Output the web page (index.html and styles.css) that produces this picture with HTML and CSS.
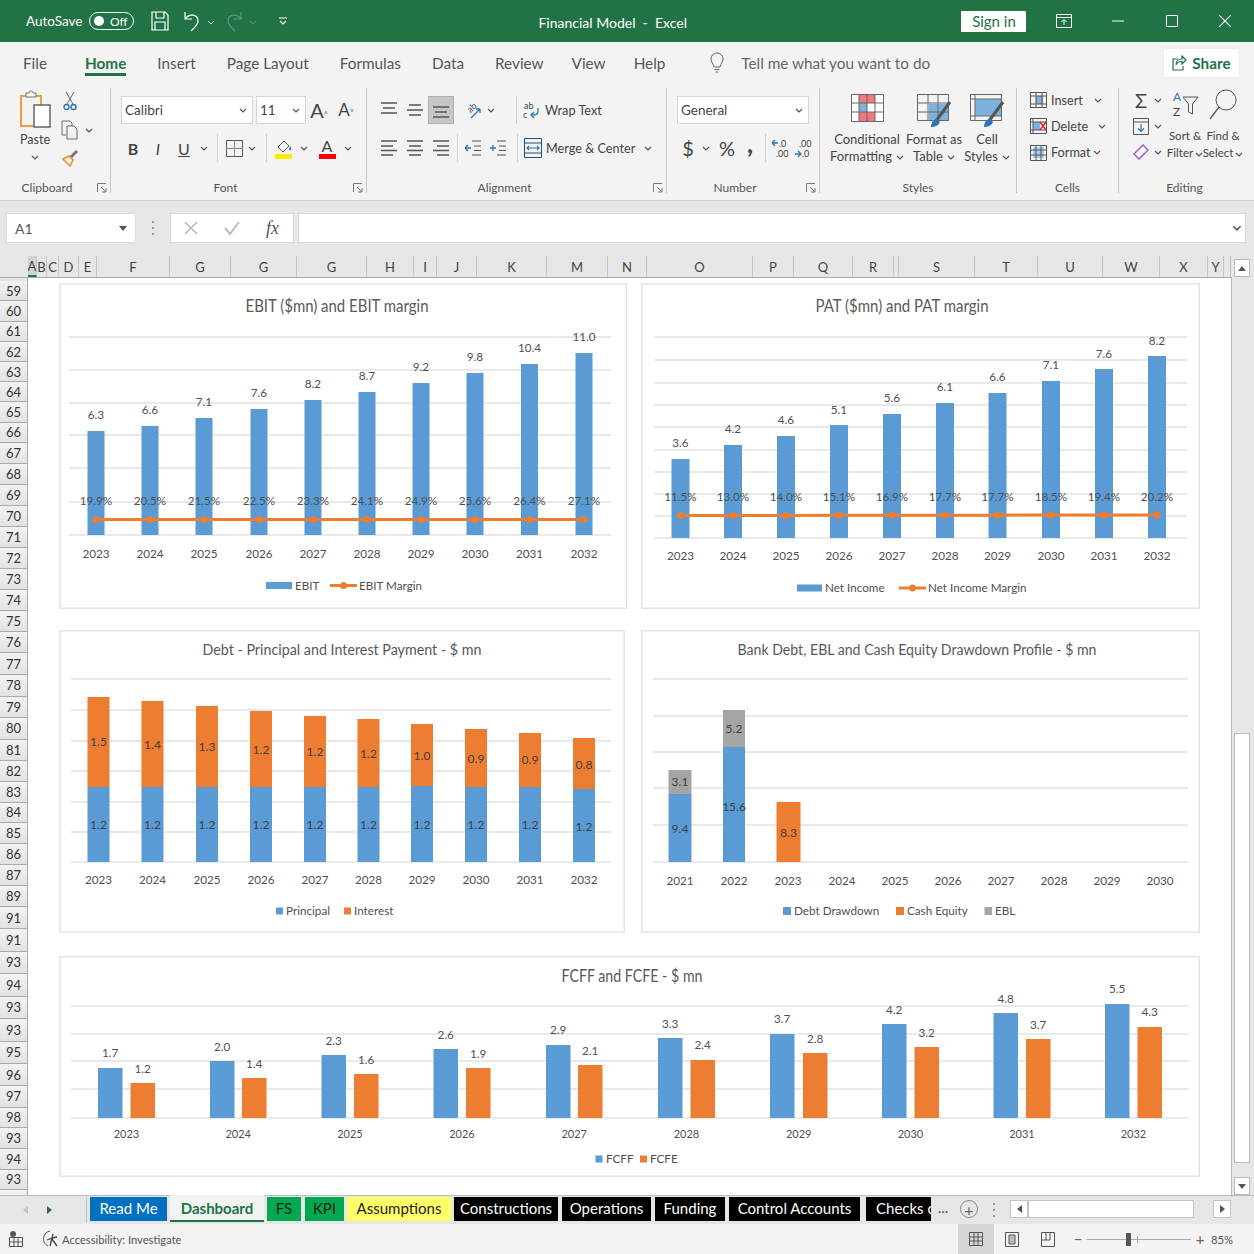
FILE: index.html
```html
<!DOCTYPE html>
<html lang="en">

<head>
    <meta charset="UTF-8">
    <title>Financial Model - Excel</title>
    <link rel="stylesheet" href="styles.css">
</head>

<body>
    <!-- shared icons -->
    <svg class="sprite">
        <symbol id="chev" viewBox="0 0 8 5"><path d="M1 1l3 3 3-3" fill="none" stroke="#555" stroke-width="1.2"/></symbol>
        <symbol id="launcher" viewBox="0 0 10 10"><path d="M.5 9V.5H9M4 4l5 5M9 5v4H5" fill="none" stroke="#777"/></symbol>
        <symbol id="a-top" viewBox="0 0 16 16"><path d="M0 1h16M2 6h12M0 11h16" stroke="#555" stroke-width="1.3"/></symbol>
        <symbol id="a-mid" viewBox="0 0 16 16"><path d="M2 3h12M0 8h16M2 13h12" stroke="#555" stroke-width="1.3"/></symbol>
        <symbol id="a-bot" viewBox="0 0 16 16"><path d="M0 5h16M2 10h12M0 15h16" stroke="#555" stroke-width="1.3"/></symbol>
        <symbol id="a-left" viewBox="0 0 16 16"><path d="M0 1h16M0 6h12M0 10.500h16M0 15h12" stroke="#555" stroke-width="1.3"/></symbol>
        <symbol id="a-center" viewBox="0 0 16 16"><path d="M0 1h16M2 6h12M0 10.500h16M2 15h12" stroke="#555" stroke-width="1.3"/></symbol>
        <symbol id="a-right" viewBox="0 0 16 16"><path d="M0 1h16M4 6h12M0 10.500h16M4 15h12" stroke="#555" stroke-width="1.3"/></symbol>
    </svg>

    <header class="title-bar">
        <span class="autosave">AutoSave</span>
        <span class="toggle"><span class="toggle-dot"></span>Off</span>
        <svg class="qa-save" width="18" height="20" viewBox="0 0 18 20"><path d="M1 1h13l3 3v15H1zM5 1v6h8V1M4 19v-8h10v8" fill="none" stroke="#fff" stroke-width="1.2"/></svg>
        <svg class="qa-undo" width="18" height="22" viewBox="0 0 18 22"><path d="M2 2v7h7M2 9c4-6 13-5 13 2 0 4-4 7-7 10" fill="none" stroke="#fff" stroke-width="1.2"/></svg>
        <svg class="qa-chev" width="8" height="5" viewBox="0 0 8 5"><path d="M1 1l3 3 3-3" fill="none" stroke="#fff"/></svg>
        <svg class="qa-redo" width="18" height="22" viewBox="0 0 18 22"><path d="M16 2v7H9M16 9C12 3 3 4 3 11c0 4 4 7 7 10" fill="none" stroke="#5f9a7c" stroke-width="1.2"/></svg>
        <svg class="qa-chev" width="8" height="5" viewBox="0 0 8 5"><path d="M1 1l3 3 3-3" fill="none" stroke="#5f9a7c"/></svg>
        <svg class="qa-more" width="8" height="9" viewBox="0 0 8 9"><path d="M0 1h8M1 4l3 3 3-3" fill="none" stroke="#fff" stroke-width="1.2"/></svg>
        <span class="doc-title">Financial Model&nbsp; -&nbsp; Excel</span>
        <a class="sign-in">Sign in</a>
        <svg class="win-display" width="16" height="14" viewBox="0 0 16 14"><path d="M.5.5h15v13H.5zM.5 3.500h15M8 11V6M5.500 8L8 5.500 10.500 8" fill="none" stroke="#fff"/></svg>
        <svg class="win-min" width="12" height="2" viewBox="0 0 12 2"><path d="M0 1h12" stroke="#fff"/></svg>
        <svg class="win-max" width="12" height="12" viewBox="0 0 12 12"><path d="M.5.5h11v11H.5z" fill="none" stroke="#fff"/></svg>
        <svg class="win-close" width="12" height="12" viewBox="0 0 12 12"><path d="M0 0l12 12M12 0L0 12" stroke="#fff" stroke-width="1.1"/></svg>
    </header>

    <nav class="tab-bar">
        <a>File</a>
        <a class="active">Home</a>
        <a>Insert</a>
        <a>Page Layout</a>
        <a>Formulas</a>
        <a>Data</a>
        <a>Review</a>
        <a class="tab-view">View</a>
        <a class="tab-help">Help</a>
        <svg class="bulb" width="14" height="21" viewBox="0 0 14 21"><path d="M4 15C3 11 1 10 1 7a6 6 0 0 1 12 0c0 3-2 4-3 8zM4.500 17.500h5M5.500 20h3" fill="none" stroke="#666"/></svg>
        <span class="tell-me">Tell me what you want to do</span>
        <a class="share">
            <svg width="15" height="16" viewBox="0 0 15 16"><path d="M6 4H1v11h10v-4M4 10c0-4 3-6 6-6V1l4 4-4 4V6.500c-3 0-5 1-6 3.500z" fill="none" stroke="#217346" stroke-width="1.2"/></svg>
            Share
        </a>
    </nav>

    <section class="ribbon">
        <div class="group group-clipboard">
            <div class="group-body">
                <div class="paste">
                    <svg width="32" height="38" viewBox="0 0 32 38"><rect x="2" y="6" width="20" height="30" fill="none" stroke="#e9a23b" stroke-width="2"/><path d="M7 7V3h3a2 2 0 0 1 4 0h3v4z" fill="#f5f5f5" stroke="#777"/><rect x="15" y="15" width="16" height="22" fill="#fff" stroke="#666" stroke-width="1.5"/></svg>
                    <span class="paste-label">Paste</span>
                    <svg class="paste-chev" width="8" height="5"><use href="#chev"/></svg>
                </div>
                <div class="clip-tools">
                    <svg width="14" height="20" viewBox="0 0 14 20"><path d="M4 13L11 1M10 13L3 1" stroke="#666" fill="none"/><circle cx="3.500" cy="16" r="2.500" fill="none" stroke="#2e75b6" stroke-width="1.400"/><circle cx="10.500" cy="16" r="2.500" fill="none" stroke="#2e75b6" stroke-width="1.400"/></svg>
                    <div class="copy-row">
                        <svg width="18" height="20" viewBox="0 0 18 20"><path d="M5 15H1V1h8l2 2v3M6 6h7l3 3v10H6z" fill="none" stroke="#666"/></svg>
                        <svg width="8" height="5"><use href="#chev"/></svg>
                    </div>
                    <svg width="18" height="18" viewBox="0 0 18 18"><path d="M2 10l7 7 3-6-4-4z" fill="#fdf0e0" stroke="#e88b2d" stroke-width="1.500"/><path d="M10 8l6-6" stroke="#777" stroke-width="3"/></svg>
                </div>
            </div>
            <div class="group-foot">Clipboard<svg class="launcher" width="10" height="10"><use href="#launcher"/></svg></div>
        </div>

        <div class="group group-font">
            <div class="group-body rows">
                <div class="tool-row">
                    <div class="combo combo-font">Calibri<svg width="8" height="5"><use href="#chev"/></svg></div>
                    <div class="combo combo-size">11<svg width="8" height="5"><use href="#chev"/></svg></div>
                    <span class="btn w26 grow-a">A<sup>˄</sup></span>
                    <span class="btn w28 shrink-a">A<sup>˅</sup></span>
                </div>
                <div class="tool-row">
                    <span class="btn w24 fmt fmt-b">B</span>
                    <span class="btn w26 fmt fmt-i">I</span>
                    <span class="btn w26 fmt fmt-u">U</span>
                    <span class="btn w14"><svg width="8" height="5"><use href="#chev"/></svg></span>
                    <span class="sep"></span>
                    <span class="btn w20"><svg width="17" height="17" viewBox="0 0 17 17"><path d="M.5.5h16v16H.5z" fill="none" stroke="#555"/><path d="M8.500 0v17M0 8.500h17" stroke="#888"/></svg></span>
                    <span class="btn w16"><svg width="8" height="5"><use href="#chev"/></svg></span>
                    <span class="sep"></span>
                    <span class="btn w22"><svg width="20" height="21" viewBox="0 0 20 21"><path d="M4 9l6-6 5 5-6 6z" fill="#fff" stroke="#555"/><path d="M16 8c1 2 2 3 1 4s-2 0-2-1z" fill="#2e75b6"/><rect x="1" y="16" width="17" height="5" fill="#ffeb00"/></svg></span>
                    <span class="btn w18"><svg width="8" height="5"><use href="#chev"/></svg></span>
                    <span class="btn w28"><span class="font-color">A</span></span>
                    <span class="btn w14"><svg width="8" height="5"><use href="#chev"/></svg></span>
                </div>
            </div>
            <div class="group-foot">Font<svg class="launcher" width="10" height="10"><use href="#launcher"/></svg></div>
        </div>

        <div class="group group-align">
            <div class="group-body rows">
                <div class="tool-row">
                    <span class="btn w26"><svg width="16" height="16"><use href="#a-top"/></svg></span>
                    <span class="btn w26"><svg width="16" height="16"><use href="#a-mid"/></svg></span>
                    <span class="btn w26 pressed"><svg width="16" height="16"><use href="#a-bot"/></svg></span>
                    <span class="orient">
                        <svg width="18" height="18" viewBox="0 0 18 18"><text x="3" y="10" transform="rotate(-45 7 8)" class="svg-tiny">ab</text><path d="M6 17L15 8M15 8v4M15 8h-4" fill="none" stroke="#2e75b6" stroke-width="1.300"/></svg>
                        <svg width="8" height="5"><use href="#chev"/></svg>
                    </span>
                    <span class="sep"></span>
                    <svg width="18" height="20" viewBox="0 0 18 20"><text x="1" y="9" class="svg-tiny">ab</text><text x="0" y="18" class="svg-tiny">c</text><path d="M15 8v4c0 3-3 3-7 3M11 12l-3 3 3 3" fill="none" stroke="#2e75b6" stroke-width="1.300"/></svg>
                    <span class="tool-text">Wrap Text</span>
                </div>
                <div class="tool-row">
                    <span class="btn w26"><svg width="16" height="16"><use href="#a-left"/></svg></span>
                    <span class="btn w26"><svg width="16" height="16"><use href="#a-center"/></svg></span>
                    <span class="btn w26"><svg width="16" height="16"><use href="#a-right"/></svg></span>
                    <span class="sep tight"></span>
                    <span class="btn w24"><svg width="16" height="16" viewBox="0 0 16 16"><path d="M7 1h9M9 6h7M9 10.500h7M7 15h9" stroke="#555" stroke-width="1.200"/><path d="M6 8H0M3 5L0 8l3 3" fill="none" stroke="#2e75b6" stroke-width="1.300"/></svg></span>
                    <span class="btn w26"><svg width="16" height="16" viewBox="0 0 16 16"><path d="M7 1h9M9 6h7M9 10.500h7M7 15h9" stroke="#555" stroke-width="1.200"/><path d="M0 8h6M3 5v6" fill="none" stroke="#2e75b6" stroke-width="1.300"/></svg></span>
                    <span class="sep"></span>
                    <svg width="18" height="20" viewBox="0 0 18 20"><path d="M.5.500h17v19H.5zM.5 5h17M.5 15h17" fill="none" stroke="#1f4e79"/><path d="M3 10h12M5 8l-2 2 2 2M13 8l2 2-2 2" fill="none" stroke="#2e75b6" stroke-width="1.200"/></svg>
                    <span class="tool-text">Merge &amp; Center</span>
                    <svg class="merge-chev" width="8" height="5"><use href="#chev"/></svg>
                </div>
            </div>
            <div class="group-foot">Alignment<svg class="launcher" width="10" height="10"><use href="#launcher"/></svg></div>
        </div>

        <div class="group group-number">
            <div class="group-body rows">
                <div class="tool-row">
                    <div class="combo combo-format">General<svg width="8" height="5"><use href="#chev"/></svg></div>
                </div>
                <div class="tool-row">
                    <span class="btn w22 num-sym">$</span>
                    <span class="btn w14"><svg width="8" height="5"><use href="#chev"/></svg></span>
                    <span class="btn w28 num-sym">%</span>
                    <span class="btn w18 num-comma">,</span>
                    <span class="sep"></span>
                    <svg width="18" height="22" viewBox="0 0 18 22"><text x="7" y="10" class="svg-tiny">.0</text><text x="4" y="20" class="svg-tiny">.00</text><path d="M6 6H0M3 3L0 6l3 3" fill="none" stroke="#2e75b6" stroke-width="1.300"/></svg>
                    <svg class="dec-two" width="18" height="22" viewBox="0 0 18 22"><text x="4" y="10" class="svg-tiny">.00</text><text x="7" y="20" class="svg-tiny">.0</text><path d="M0 17h6M3 14l3 3-3 3" fill="none" stroke="#2e75b6" stroke-width="1.300"/></svg>
                </div>
            </div>
            <div class="group-foot">Number<svg class="launcher" width="10" height="10"><use href="#launcher"/></svg></div>
        </div>

        <div class="group group-styles">
            <div class="group-body styles-body">
                <div class="big-tool w78">
                    <div class="big-icon">
                        <svg width="33" height="28" viewBox="0 0 33 28"><rect x=".5" y=".5" width="32" height="27" fill="#fff"/><rect x="8" y="1" width="16" height="8" fill="#f4777f"/><rect x="8" y="9" width="8" height="9" fill="#7db2e0"/><rect x="8" y="18" width="16" height="9" fill="#f4777f"/><path d="M.5.500h32v27H.5zM8 0v28M16 0v28M24 0v28M0 9h33M0 18h33" fill="none" stroke="#666"/></svg>
                    </div>
                    <span>Conditional</span>
                    <span>Formatting<svg width="8" height="5"><use href="#chev"/></svg></span>
                </div>
                <div class="big-tool w56">
                    <div class="big-icon">
                        <svg width="35" height="34" viewBox="0 0 35 34"><rect x="12" y="10" width="20" height="17" fill="#7db2e0"/><path d="M.5.500h31v26H.5zM11 0v27M21 0v27M0 9h32M0 18h32" fill="none" stroke="#666"/><path d="M19 27L33 8" stroke="#555" stroke-width="3"/><path d="M14 33c0-5 3-8 6-8l3 3c-1 3-5 5-9 5z" fill="#2e75b6"/></svg>
                    </div>
                    <span>Format as</span>
                    <span>Table<svg width="8" height="5"><use href="#chev"/></svg></span>
                </div>
                <div class="big-tool w50">
                    <div class="big-icon">
                        <svg width="35" height="34" viewBox="0 0 35 34"><rect x="5" y="5" width="26" height="17" fill="#7db2e0"/><path d="M.5.500h31v26H.5zM5 0v27M0 5h32M0 22h32" fill="none" stroke="#666"/><path d="M19 27L33 8" stroke="#555" stroke-width="3"/><path d="M14 33c0-5 3-8 6-8l3 3c-1 3-5 5-9 5z" fill="#2e75b6"/></svg>
                    </div>
                    <span>Cell</span>
                    <span>Styles<svg width="8" height="5"><use href="#chev"/></svg></span>
                </div>
            </div>
            <div class="group-foot">Styles</div>
        </div>

        <div class="group group-cells">
            <div class="group-body stack">
                <div class="stack-row">
                    <svg width="17" height="16" viewBox="0 0 17 16"><rect x="6" y="4" width="7" height="8" fill="#7db2e0"/><path d="M.5.500h16v15H.5zM6 0v16M12 0v16M0 4h17M0 12h17" fill="none" stroke="#555"/></svg>
                    <span class="tool-text">Insert</span><svg class="chev-insert" width="8" height="5"><use href="#chev"/></svg>
                </div>
                <div class="stack-row">
                    <svg width="17" height="16" viewBox="0 0 17 16"><rect x="3" y="4" width="7" height="8" fill="#7db2e0"/><path d="M.5.500h16v15H.5zM3 0v16M0 4h17M0 12h17" fill="none" stroke="#555"/><path d="M10 4l6 8M16 4l-6 8" stroke="#e3202c" stroke-width="1.500"/></svg>
                    <span class="tool-text">Delete</span><svg class="chev-delete" width="8" height="5"><use href="#chev"/></svg>
                </div>
                <div class="stack-row">
                    <svg width="17" height="18" viewBox="0 0 17 18"><rect x="3" y="4" width="11" height="11" fill="#a9cdee"/><path d="M.5 2.500h16v15H.5zM6 2v16M11 2v16M0 7h17M0 12h17" fill="none" stroke="#555"/></svg>
                    <span class="tool-text">Format</span><svg class="chev-format" width="8" height="5"><use href="#chev"/></svg>
                </div>
            </div>
            <div class="group-foot">Cells</div>
        </div>

        <div class="group group-editing">
            <div class="group-body editing-body">
                <div class="stack editing-stack">
                    <div class="stack-row"><span class="sigma">Σ</span><svg width="8" height="5"><use href="#chev"/></svg></div>
                    <div class="stack-row">
                        <svg width="16" height="17" viewBox="0 0 16 17"><path d="M.5.500h15v16H.5zM.5 4h15" fill="none" stroke="#555"/><path d="M8 6v7M5 10.500l3 3 3-3" fill="none" stroke="#2e75b6" stroke-width="1.200"/></svg>
                        <svg width="8" height="5"><use href="#chev"/></svg>
                    </div>
                    <div class="stack-row">
                        <svg width="16" height="17" viewBox="0 0 16 17"><path d="M1 10l9-9 5 5-9 9z" fill="#fff" stroke="#a64dc2" stroke-width="1.300"/></svg>
                        <svg width="8" height="5"><use href="#chev"/></svg>
                    </div>
                </div>
                <div class="big-tool w38 small-big">
                    <div class="big-icon short">
                        <svg width="27" height="30" viewBox="0 0 27 30"><text x="1" y="12" class="svg-sort svg-blue">A</text><text x="1" y="26.500" class="svg-sort">Z</text><path d="M11 8h15l-5.500 7v10l-4-2v-8z" fill="none" stroke="#555"/></svg>
                    </div>
                    <span>Sort &amp;</span>
                    <span>Filter<svg width="8" height="5"><use href="#chev"/></svg></span>
                </div>
                <div class="big-tool w38 small-big">
                    <div class="big-icon short">
                        <svg width="28" height="32" viewBox="0 0 28 32"><circle cx="17" cy="11" r="10" fill="none" stroke="#555"/><path d="M10 18L1 30" stroke="#555" stroke-width="1.300"/></svg>
                    </div>
                    <span>Find &amp;</span>
                    <span>Select<svg width="8" height="5"><use href="#chev"/></svg></span>
                </div>
            </div>
            <div class="group-foot">Editing</div>
        </div>
    </section>

    <section class="formula-bar">
        <div class="name-box">A1<span class="tri-down"></span></div>
        <span class="grip"></span>
        <div class="fx-buttons">
            <svg width="14" height="14" viewBox="0 0 14 14"><path d="M1 1l12 12M13 1L1 13" stroke="#bbb" stroke-width="1.600"/></svg>
            <svg width="16" height="14" viewBox="0 0 16 14"><path d="M1 7l5 6L15 1" fill="none" stroke="#bbb" stroke-width="2"/></svg>
            <span class="fx">fx</span>
        </div>
        <div class="formula-input"><svg width="10" height="6" viewBox="0 0 8 5"><path d="M1 1l3 3 3-3" fill="none" stroke="#555" stroke-width="1.300"/></svg></div>
    </section>

    <main class="workbook">
        <div class="grid">
            <div class="col-heads" id="colHeads"></div>
            <div class="sheet">
                <div class="row-heads" id="rowHeads"></div>
                <div class="canvas">
                    <div class="chart-row row-top">
                        <div class="chart chart-ebit" id="ebit"></div>
                        <div class="chart chart-pat" id="pat"></div>
                    </div>
                    <div class="chart-row row-mid">
                        <div class="chart chart-debt" id="debt"></div>
                        <div class="chart chart-draw" id="draw"></div>
                    </div>
                    <div class="chart chart-fcf" id="fcf"></div>
                </div>
            </div>
        </div>
        <div class="vscroll">
            <span class="sb-btn"><span class="tri-up"></span></span>
            <span class="sb-thumb"></span>
            <span class="sb-btn"><span class="tri-down"></span></span>
        </div>
    </main>

    <section class="sheet-tabs">
        <div class="tab-nav"><span class="nav-prev"></span><span class="nav-next"></span></div>
        <a class="tab tab-read">Read Me</a>
        <a class="tab tab-dash">Dashboard</a>
        <a class="tab tab-fs">FS</a>
        <a class="tab tab-kpi">KPI</a>
        <a class="tab tab-assume">Assumptions</a>
        <a class="tab tab-black tab-cons">Constructions</a>
        <a class="tab tab-black tab-ops">Operations</a>
        <a class="tab tab-black tab-fund">Funding</a>
        <a class="tab tab-black tab-ctrl">Control Accounts</a>
        <a class="tab tab-black tab-checks">Checks of</a>
        <span class="tab-more">...</span>
        <span class="tab-add">+</span>
        <span class="grip"></span>
        <div class="hscroll">
            <span class="hs-btn"><span class="tri-left"></span></span>
            <span class="hs-thumb"></span>
            <span class="hs-btn"><span class="tri-right"></span></span>
        </div>
    </section>

    <footer class="status-bar">
        <svg class="st-mode" width="14" height="16" viewBox="0 0 14 16"><circle cx="4" cy="3" r="3" fill="#555"/><path d="M.5 6.500h13v9H.5zM5 6v10M9 6v10M0 11h14" fill="none" stroke="#555"/></svg>
        <svg class="st-access" width="18" height="18" viewBox="0 0 18 18"><path d="M8 1a8 8 0 0 0-2 15" fill="none" stroke="#555"/><path d="M11 4l-1 4-5 2M10 8l5-1M10 8l-2 8M10 9l5 7" fill="none" stroke="#444" stroke-width="1.300"/></svg>
        <span class="st-text">Accessibility: Investigate</span>
        <span class="st-view active">
            <svg width="14" height="14" viewBox="0 0 14 14"><path d="M.5.500h13v13H.5zM5 0v14M9 0v14M0 5h14M0 9h14" fill="none" stroke="#555"/></svg>
        </span>
        <span class="st-view">
            <svg width="14" height="15" viewBox="0 0 14 15"><path d="M.5.500h13v14H.5z" fill="none" stroke="#555"/><path d="M4 3h6v9H4z" fill="#bbb" stroke="#555"/></svg>
        </span>
        <span class="st-view">
            <svg width="14" height="15" viewBox="0 0 14 15"><path d="M.5.500h13v14H.5zM5 0v8h4V0M0 8h5" fill="none" stroke="#555"/></svg>
        </span>
        <span class="zoom-btn zoom-minus">−</span>
        <span class="zoom-track"><span class="zoom-handle"></span><span class="zoom-tick"></span></span>
        <span class="zoom-btn zoom-plus">+</span>
        <span class="zoom-pct">85%</span>
    </footer>

    <script src="charts.js"></script>
</body>

</html>
```

FILE: styles.css
```css
* {
    box-sizing: border-box;
}

body {
    margin: 0;
    width: 1254px;
    height: 1254px;
    overflow: hidden;
    display: flex;
    flex-direction: column;
    background: #f3f3f3;
    font-family: Lato, "Liberation Sans", sans-serif;
    font-size: 13px;
    color: #444;
}

.sprite {
    display: none;
}

svg {
    flex: none;
}

/* title bar */
.title-bar {
    height: 42px;
    flex: none;
    display: flex;
    align-items: center;
    padding-left: 26px;
    background: #217346;
    color: #fff;
    font-size: 14px;
}

.autosave {
    font-size: 13.500px;
}

.toggle {
    width: 45px;
    height: 18px;
    margin-left: 7px;
    display: flex;
    align-items: center;
    justify-content: space-between;
    padding: 0 6px 0 4px;
    border: 1px solid #fff;
    border-radius: 9px;
    font-size: 12px;
}

.toggle-dot {
    width: 10px;
    height: 10px;
    border-radius: 50%;
    background: #fff;
}

.qa-save {
    margin-left: 17px;
}

.qa-undo {
    margin-left: 14px;
}

.qa-chev {
    margin-left: 6px;
    margin-top: 2px;
}

.qa-redo {
    margin-left: 10px;
}

.qa-more {
    margin-left: 22px;
}

.doc-title {
    margin-left: 251px;
    width: 423px;
    padding-top: 2px;
}

.sign-in {
    width: 65px;
    height: 21px;
    display: flex;
    align-items: center;
    justify-content: center;
    background: #fff;
    color: #217346;
    font-size: 15px;
    border-radius: 1px;
}

.win-display {
    margin-left: 30px;
}

.win-min {
    margin-left: 40px;
}

.win-max {
    margin-left: 42px;
}

.win-close {
    margin-left: 41px;
}

/* ribbon tabs */
.tab-bar {
    height: 43px;
    flex: none;
    display: flex;
    align-items: center;
    gap: 31px;
    padding: 0 0 2px 23px;
    font-size: 15.300px;
    color: #555;
    white-space: nowrap;
}

.tab-bar a.active {
    position: relative;
    margin-left: 7px;
    color: #217346;
    font-weight: 700;
}

.tab-bar a.active::after {
    content: "";
    position: absolute;
    left: 0;
    right: 0;
    bottom: -4px;
    height: 3px;
    background: #217346;
}

.tab-bar .tab-view {
    margin-left: -3px;
}

.tab-bar .tab-help {
    margin-left: -3px;
}

.bulb {
    margin-left: 14px;
}

.tell-me {
    margin-left: -14px;
    width: 392px;
    color: #666;
}

.share {
    width: 75px;
    height: 28px;
    display: flex;
    align-items: center;
    gap: 5px;
    padding-left: 8px;
    background: #fff;
    color: #217346;
    font-weight: 700;
    box-shadow: 0 0 2px #ddd;
}

/* ribbon */
.ribbon {
    height: 115px;
    flex: none;
    display: flex;
    padding: 3px 0 7px;
}

.group {
    position: relative;
    display: flex;
    flex-direction: column;
    border-right: 1px solid #c6c6c6;
}

.group:last-child {
    border-right: 0;
}

.group-clipboard { width: 111px; }
.group-font { width: 256px; }
.group-align { width: 300px; }
.group-number { width: 153px; }
.group-styles { width: 197px; }
.group-cells { width: 102px; }
.group-editing { width: 135px; }

.group-body {
    height: 92px;
    flex: none;
    display: flex;
}

.group-foot {
    margin-top: 1px;
    text-align: center;
    font-size: 12px;
    line-height: 14px;
    color: #555;
}

.group-clipboard .group-foot { padding-right: 16px; }
.group-font .group-foot { padding-right: 26px; }
.group-align .group-foot { padding-right: 24px; }
.group-number .group-foot { padding-right: 16px; }
.group-editing .group-foot { padding-right: 4px; }

.launcher {
    position: absolute;
    right: 3px;
    bottom: 0;
}

.paste {
    width: 32px;
    margin: 2px 0 0 19px;
    display: flex;
    flex-direction: column;
    align-items: center;
    flex: none;
}

.paste-label {
    margin-top: 4px;
    line-height: 16px;
    font-size: 12.500px;
}

.paste-chev {
    margin-top: 7px;
}

.clip-tools {
    margin: 3px 0 0 10px;
    display: flex;
    flex-direction: column;
    gap: 9px;
    align-items: flex-start;
}

.clip-tools > svg:first-child {
    margin-left: 2px;
}

.copy-row {
    display: flex;
    align-items: center;
    gap: 6px;
}

.rows {
    flex-direction: column;
    gap: 10px;
    padding-top: 8px;
}

.tool-row {
    height: 28px;
    display: flex;
    align-items: center;
}

.group-font .rows,
.group-number .rows {
    padding-left: 10px;
}

.group-align .rows {
    padding-left: 9px;
}

.btn {
    height: 28px;
    display: flex;
    align-items: center;
    justify-content: center;
    flex: none;
}

.w14 { width: 14px; }
.w16 { width: 16px; }
.w18 { width: 18px; }
.w20 { width: 20px; }
.w22 { width: 22px; }
.w24 { width: 24px; }
.w26 { width: 26px; }
.w28 { width: 28px; }
.w38 { width: 38px; }
.w50 { width: 50px; }
.w56 { width: 56px; }
.w78 { width: 78px; }

.sep {
    width: 1px;
    height: 28px;
    margin: 0 6px;
    background: #d0d0d0;
    flex: none;
}

.sep.tight {
    margin: 0 3px;
}

.tool-text {
    margin-left: 4px;
    font-size: 12.700px;
    white-space: nowrap;
}

.pressed {
    background: #c6c6c6;
    border: 1px solid #b0b0b0;
}

.combo {
    height: 28px;
    display: flex;
    align-items: center;
    justify-content: space-between;
    padding: 0 5px 0 3px;
    background: #fff;
    border: 1px solid #d6d6d6;
    font-size: 13.500px;
}

.combo-font { width: 132px; }
.combo-size { width: 50px; margin-left: 3px; }
.combo-format { width: 132px; }

.grow-a,
.shrink-a {
    align-items: baseline;
    line-height: 28px;
}

.grow-a { font-size: 20px; }
.shrink-a { font-size: 17px; }

.grow-a sup,
.shrink-a sup {
    font-size: 9px;
    color: #2e75b6;
    line-height: 0;
}

.fmt {
    font-size: 16px;
    color: #444;
}

.fmt-b { font-weight: 700; }
.fmt-i { font-style: italic; }
.fmt-u { text-decoration: underline; }

.font-color {
    width: 17px;
    height: 22px;
    text-align: center;
    font-size: 16px;
    line-height: 17px;
    border-bottom: 5px solid #f00;
}

.orient {
    width: 56px;
    display: flex;
    align-items: center;
    gap: 4px;
    padding-left: 11px;
}

.merge-chev {
    margin-left: 9px;
}

.num-sym {
    font-size: 20px;
}

.num-comma {
    font-size: 26px;
    font-weight: 700;
    padding-bottom: 10px;
}

.dec-two {
    margin-left: 5px;
}

.svg-tiny {
    font-size: 9px;
    fill: #444;
}

.svg-sort {
    font-size: 12px;
    fill: #444;
}

.svg-blue {
    fill: #2e75b6;
}

.styles-body {
    padding: 6px 0 0 8px;
}

.big-tool {
    display: flex;
    flex-direction: column;
    align-items: center;
    flex: none;
    line-height: 17px;
    font-size: 13px;
    white-space: nowrap;
}

.big-tool svg[width="8"] {
    margin-left: 4px;
    vertical-align: middle;
}

.big-icon {
    height: 37px;
}

.small-big {
    font-size: 11.500px;
}

.small-big svg[width="8"] {
    margin-left: 2px;
}

.big-icon.short {
    height: 39px;
}

.stack {
    flex-direction: column;
    margin: -1px 0 1px;
}

.group-cells .stack {
    padding-left: 13px;
}

.stack-row {
    height: 26px;
    display: flex;
    align-items: center;
}

.chev-insert { margin-left: 11px; }
.chev-delete { margin-left: 10px; }
.chev-format { margin-left: 2px; }

.editing-body {
    padding-left: 14px;
}

.editing-stack {
    width: 33px;
    display: flex;
}

.editing-stack .stack-row {
    gap: 5px;
}

.sigma {
    width: 16px;
    font-size: 20px;
    line-height: 20px;
    text-align: center;
}

.small-big .big-icon {
    padding-top: 1px;
}

/* formula bar */
.formula-bar {
    height: 56px;
    flex: none;
    display: flex;
    align-items: center;
    padding: 12px 8px 13px 6px;
    background: #e6e6e6;
    border-top: 1px solid #cfcfcf;
}

.name-box {
    width: 130px;
    height: 30px;
    display: flex;
    align-items: center;
    justify-content: space-between;
    padding: 0 8px;
    background: #fff;
    border: 1px solid #dcdcdc;
    font-size: 14px;
    color: #555;
}

.grip {
    width: 2px;
    height: 14px;
    margin: 0 16px;
    background: repeating-linear-gradient(#999 0 2px, transparent 2px 6px);
    flex: none;
}

.fx-buttons {
    width: 124px;
    height: 30px;
    display: flex;
    align-items: center;
    justify-content: space-between;
    padding: 0 14px 0 13px;
    background: #fff;
    border: 1px solid #dcdcdc;
}

.fx {
    font-family: "Liberation Serif", serif;
    font-style: italic;
    font-size: 18px;
    color: #555;
}

.formula-input {
    flex: 1;
    height: 30px;
    margin-left: 4px;
    display: flex;
    align-items: center;
    justify-content: flex-end;
    padding-right: 3px;
    background: #fff;
    border: 1px solid #dcdcdc;
}

/* sheet */
.workbook {
    height: 939px;
    flex: none;
    display: flex;
    background: #e6e6e6;
}

.grid {
    width: 1232px;
    flex: none;
    display: flex;
    flex-direction: column;
}

.col-heads {
    height: 22px;
    flex: none;
    display: flex;
    padding-left: 28px;
    border-bottom: 1px solid #aaa;
}

.col-head {
    display: flex;
    align-items: center;
    justify-content: center;
    overflow: hidden;
    font-size: 13px;
    color: #444;
    border-right: 1px solid #c4c4c4;
}

.col-head.selected {
    background: #d2d2d2;
    border-bottom: 2px solid #217346;
}

.sheet {
    height: 917px;
    display: flex;
    background: #fff;
    border-right: 1px solid #bbb;
    overflow: hidden;
}

.row-heads {
    width: 28px;
    flex: none;
    padding-top: 3px;
    background: #e6e6e6;
    border-right: 1px solid #aaa;
    overflow: hidden;
}

.row-head {
    display: flex;
    align-items: center;
    justify-content: center;
    font-size: 13px;
    color: #333;
    background: linear-gradient(#f2f2f2, #e2e2e2);
    border-bottom: 1px solid #aaa;
}

.canvas {
    flex: 1;
    padding: 5px 0 0 31px;
}

.chart-row {
    display: flex;
}

.row-top {
    gap: 14px;
    margin-bottom: 21px;
}

.row-mid {
    gap: 16px;
    margin-bottom: 23px;
}

.chart {
    background: #fff;
    box-shadow: inset 0 0 0 1.500px #e4e4e4;
    flex: none;
}

.chart svg {
    display: block;
}

.chart-ebit { width: 568px; height: 326px; }
.chart-pat { width: 559px; height: 326px; }
.chart-debt { width: 566px; height: 303px; }
.chart-draw { width: 559px; height: 303px; }
.chart-fcf { width: 1141px; height: 221px; }

.chart text {
    font-size: 11.700px;
    fill: #505050;
    text-anchor: middle;
    dominant-baseline: central;
}

.chart text.c-title {
    font-size: 17px;
    fill: #595959;
}

.chart text.c-title-sm {
    font-size: 14.500px;
    fill: #595959;
}

.chart text.c-in {
    font-size: 12px;
    fill: #404040;
}

.chart text.c-leg {
    text-anchor: start;
}

.chart text.c-year-sm {
    font-size: 11px;
}

/* scrollbars */
.vscroll {
    flex: 1;
    display: flex;
    flex-direction: column;
    padding: 3px 4px 0 2px;
}

.sb-btn {
    height: 18px;
    flex: none;
    display: flex;
    align-items: center;
    justify-content: center;
    background: #fff;
    border: 1px solid #bbb;
}

.sb-thumb {
    width: 100%;
    height: 430px;
    margin: 456px 0 14px;
    background: #fff;
    border: 1px solid #bbb;
}

.tri-up,
.tri-down,
.tri-left,
.tri-right {
    width: 0;
    height: 0;
    border: 4px solid transparent;
}

.tri-up {
    border-top: 0;
    border-bottom: 5px solid #555;
}

.tri-down {
    border-bottom: 0;
    border-top: 5px solid #555;
}

.tri-left {
    border-left: 0;
    border-right: 5px solid #555;
}

.tri-right {
    border-right: 0;
    border-left: 5px solid #555;
}

/* sheet tabs */
.sheet-tabs {
    height: 29px;
    flex: none;
    display: flex;
    align-items: flex-start;
    gap: 3px;
    padding-top: 1px;
    background: #e6e6e6;
    font-size: 15px;
    border-top: 1px solid #bbb;
}

.tab-nav {
    width: 87px;
    height: 26px;
    display: flex;
    align-items: center;
    gap: 19px;
    padding-left: 23px;
    border-right: 1px solid #c4c4c4;
}

.nav-prev {
    border: 4px solid transparent;
    border-left: 0;
    border-right: 5px solid #c4c4c4;
}

.nav-next {
    border: 4px solid transparent;
    border-right: 0;
    border-left: 5px solid #217346;
}

.tab {
    height: 24px;
    display: flex;
    align-items: center;
    justify-content: center;
    flex: none;
    padding-bottom: 2px;
    white-space: nowrap;
    overflow: hidden;
}

.tab-read { width: 77px; background: #0070c0; color: #fff; }
.tab-dash { width: 94px; height: 27px; margin-top: -2px; padding-top: 2px; background: #f3f3f3; color: #217346; font-weight: 700; border-bottom: 2px solid #217346; }
.tab-fs { width: 34px; background: #00a94f; color: #222; }
.tab-kpi { width: 39px; background: #00a94f; color: #222; margin-left: 1px; }
.tab-assume { width: 104px; background: #ffff66; color: #222; }
.tab-black { background: #000; color: #fff; }
.tab-cons { width: 104px; }
.tab-ops { width: 89px; margin-left: 1px; }
.tab-fund { width: 70px; margin-left: 1px; }
.tab-ctrl { width: 131px; margin-left: 1px; }
.tab-checks { width: 65px; margin-left: 3px; justify-content: flex-start; padding-left: 10px; }

.tab-more {
    width: 14px;
    margin-left: 2px;
    padding-top: 1px;
    text-align: center;
    color: #217346;
}

.tab-add {
    width: 18px;
    height: 18px;
    margin: 3px 0 0 7px;
    display: flex;
    align-items: center;
    justify-content: center;
    border: 1px solid #888;
    border-radius: 50%;
    font-size: 16px;
    color: #666;
}

.sheet-tabs .grip {
    margin: 6px 6px 0 12px;
}

.hscroll {
    width: 221px;
    height: 18px;
    margin: 3px 0 0 6px;
    display: flex;
}

.hs-btn {
    width: 18px;
    display: flex;
    align-items: center;
    justify-content: center;
    background: #fff;
    border: 1px solid #c4c4c4;
}

.hs-thumb {
    width: 166px;
    margin-right: 19px;
    background: #fff;
    border: 1px solid #c4c4c4;
}

/* status bar */
.status-bar {
    flex: 1;
    display: flex;
    align-items: center;
    padding-left: 9px;
    font-size: 11.200px;
    color: #555;
}

.st-access {
    margin-left: 19px;
}

.st-text {
    width: 896px;
    margin-left: 2px;
}

.st-view {
    width: 36px;
    height: 100%;
    display: flex;
    align-items: center;
    justify-content: center;
}

.st-view.active {
    background: #d6d6d6;
}

.zoom-btn {
    font-size: 15px;
    color: #666;
    width: 12px;
    text-align: center;
}

.zoom-minus {
    margin-left: 6px;
}

.zoom-track {
    position: relative;
    width: 105px;
    height: 1px;
    margin-left: 2px;
    background: #aaa;
}

.zoom-handle {
    position: absolute;
    left: 40px;
    top: -6px;
    width: 5px;
    height: 13px;
    background: #555;
}

.zoom-tick {
    position: absolute;
    left: 51px;
    top: -3px;
    width: 1px;
    height: 7px;
    background: #aaa;
}

.zoom-plus {
    margin-left: 3px;
}

.zoom-pct {
    margin-left: 5px;
}
```

FILE: charts.js
```js
const BLUE = '#5b9bd5';
const ORANGE = '#ed7d31';
const GREY = '#a5a5a5';

// Column letters and where each one ends, the widths in this sheet are uneven
const columns = [['A', 37], ['B', 47], ['C', 59], ['D', 79], ['E', 97], ['F', 170], ['G', 231], ['G', 297], ['G', 367],
    ['H', 414], ['I', 437], ['J', 477], ['K', 547], ['M', 608], ['N', 647], ['O', 753], ['P', 794], ['Q', 853], ['R', 894],
    ['', 899], ['S', 975], ['T', 1038], ['U', 1103], ['W', 1160], ['X', 1208], ['Y', 1224], ['', 1231]];

// Row number and the y of its middle
const rows = [[59, 291], [60, 311], [61, 332], [62, 352], [63, 372], [64, 392], [65, 412], [66, 433], [67, 453], [68, 474],
    [69, 495], [70, 516], [71, 537], [72, 558], [73, 579], [74, 600], [75, 621], [76, 642], [77, 664], [78, 686], [79, 707],
    [80, 729], [81, 750], [82, 771], [83, 792], [84, 813], [85, 833], [86, 854], [87, 875], [89, 896], [91, 918], [91, 940],
    [93, 963], [94, 985], [93, 1008], [93, 1030], [95, 1053], [96, 1075], [97, 1097], [98, 1118], [93, 1138], [94, 1159],
    [93, 1180], ['', 1200]];

let start = 28;
const colHeads = document.getElementById('colHeads');
columns.forEach(([label, end], i) => {
    const head = document.createElement('div');
    head.className = i === 0 ? 'col-head selected' : 'col-head';
    head.style.width = (end - start) + 'px';
    head.textContent = label;
    colHeads.appendChild(head);
    start = end;
});

let rowTop = 281;
const rowHeads = document.getElementById('rowHeads');
rows.forEach(([label, mid], i) => {
    const bottom = i + 1 < rows.length ? (mid + rows[i + 1][1]) / 2 : mid + 10;
    const head = document.createElement('div');
    head.className = 'row-head';
    head.style.height = (bottom - rowTop) + 'px';
    head.textContent = label;
    rowHeads.appendChild(head);
    rowTop = bottom;
});

function node(tag, attrs, text) {
    const n = document.createElementNS('http://www.w3.org/2000/svg', tag);
    Object.keys(attrs).forEach(k => n.setAttribute(k, attrs[k]));
    if (text !== undefined) n.textContent = text;
    return n;
}

// viewBox uses page coordinates, so numbers below read straight from the sheet
function drawChart(c) {
    const [x, y, w, h] = c.box;
    const svg = node('svg', { width: w, height: h, viewBox: `${x} ${y} ${w} ${h}` });

    c.gridY.forEach(gy => {
        svg.appendChild(node('line', { x1: c.gridX[0], x2: c.gridX[1], y1: gy, y2: gy, stroke: '#e2e2e2', 'stroke-width': 1.5 }));
    });
    c.bars.forEach(([left, width, top, bottom, fill]) => {
        svg.appendChild(node('rect', { x: left, y: top, width, height: bottom - top, fill }));
    });
    if (c.line) {
        svg.appendChild(node('polyline', {
            points: c.line.map(p => p.join(',')).join(' '),
            fill: 'none', stroke: ORANGE, 'stroke-width': 3
        }));
        c.line.forEach(p => svg.appendChild(node('circle', { cx: p[0], cy: p[1], r: 3.5, fill: ORANGE })));
    }
    c.legend.forEach(item => {
        if (item.line) {
            svg.appendChild(node('line', { x1: item.line[0], x2: item.line[1], y1: item.y, y2: item.y, stroke: ORANGE, 'stroke-width': 3 }));
            svg.appendChild(node('circle', { cx: (item.line[0] + item.line[1]) / 2, cy: item.y, r: 3.5, fill: ORANGE }));
        } else {
            svg.appendChild(node('rect', { x: item.box[0], width: item.box[1] - item.box[0], y: item.y - item.box[2] / 2, height: item.box[2], fill: item.fill }));
        }
        svg.appendChild(node('text', { x: item.textX, y: item.y - 1, class: 'c-leg' }, item.text));
    });
    c.texts.forEach(([tx, ty, str, cls]) => {
        svg.appendChild(node('text', { x: tx, y: ty - 1, class: cls || '' }, str));
    });
    // titles in the sheet are set narrower than Lato, squeeze to the same width
    const [titleText, titleX, titleY, titleClass, titleWidth] = c.title;
    svg.appendChild(node('text', {
        x: titleX, y: titleY - 2, class: titleClass,
        textLength: titleWidth, lengthAdjust: 'spacingAndGlyphs'
    }, titleText));

    document.getElementById(c.id).appendChild(svg);
}

const yearLabels = (from, xs, y, cls) => xs.map((x, i) => [x, y, String(from + i), cls]);

// EBIT
const ebitX = [96, 150, 204, 259, 313, 367, 421, 475, 529.5, 584];
const ebitTop = [431, 426, 418, 409, 400, 392, 383, 373, 364, 353];
const ebitVal = ['6.3', '6.6', '7.1', '7.6', '8.2', '8.7', '9.2', '9.8', '10.4', '11.0'];
const ebitPct = ['19.9%', '20.5%', '21.5%', '22.5%', '23.3%', '24.1%', '24.9%', '25.6%', '26.4%', '27.1%'];

drawChart({
    id: 'ebit',
    box: [59, 283, 568, 326],
    title: ['EBIT ($mn) and EBIT margin', 337, 307, 'c-title', 183],
    gridX: [69, 611],
    gridY: [337, 370, 403, 435, 468, 502, 535],
    bars: ebitX.map((x, i) => [x - 8.5, 17, ebitTop[i], 535, BLUE]),
    line: ebitX.map(x => [x, 519.5]),
    texts: [
        ...ebitX.map((x, i) => [x, ebitTop[i] - 16, ebitVal[i]]),
        ...ebitX.map((x, i) => [x, 501, ebitPct[i]]),
        ...yearLabels(2023, ebitX, 554)
    ],
    legend: [
        { box: [266, 292, 7], y: 585.5, fill: BLUE, textX: 295, text: 'EBIT' },
        { line: [330, 357], y: 585.5, textX: 359, text: 'EBIT Margin' }
    ]
});

// PAT
const patX = [680.5, 733, 786, 839, 892, 945, 997.5, 1051, 1104, 1157];
const patTop = [459, 445, 436, 425, 414, 403, 393, 381, 369, 356];
const patLabelY = [443, 429, 420, 410, 398, 387, 377, 365, 354, 341];
const patVal = ['3.6', '4.2', '4.6', '5.1', '5.6', '6.1', '6.6', '7.1', '7.6', '8.2'];
const patPct = ['11.5%', '13.0%', '14.0%', '15.1%', '16.9%', '17.7%', '17.7%', '18.5%', '19.4%', '20.2%'];

drawChart({
    id: 'pat',
    box: [641, 283, 559, 326],
    title: ['PAT ($mn) and PAT margin', 902, 307, 'c-title', 173],
    gridX: [654, 1187],
    gridY: [337, 360, 383, 405, 427, 450, 472, 494, 516, 538],
    bars: patX.map((x, i) => [x - 9, 18, patTop[i], 538, BLUE]),
    line: patX.map((x, i) => [x, 515.5 - i * 0.06]),
    texts: [
        ...patX.map((x, i) => [x, patLabelY[i], patVal[i]]),
        ...patX.map((x, i) => [x, 497, patPct[i]]),
        ...yearLabels(2023, patX, 556)
    ],
    legend: [
        { box: [797, 822, 7], y: 588, fill: BLUE, textX: 825, text: 'Net Income' },
        { line: [899, 926], y: 588, textX: 928, text: 'Net Income Margin' }
    ]
});

// Debt service
const debtX = [98.5, 152.5, 207, 261, 315, 368.5, 422, 476, 530, 584];
const debtBlueTop = [787, 787, 787, 787, 787, 787, 786, 787, 787, 789];
const debtOrangeTop = [697, 701, 706, 711, 716, 719, 724, 729, 733, 738];
const debtOrangeY = [742, 745, 747, 750, 752, 754, 756, 759, 760, 765];
const debtInterest = ['1.5', '1.4', '1.3', '1.2', '1.2', '1.2', '1.0', '0.9', '0.9', '0.8'];

drawChart({
    id: 'debt',
    box: [59, 630, 566, 303],
    title: ['Debt - Principal and Interest Payment - $ mn', 342, 651, 'c-title-sm', 279],
    gridX: [71, 611],
    gridY: [679, 710, 741, 771, 802, 832, 862],
    bars: [
        ...debtX.map((x, i) => [x - 11, 22, debtBlueTop[i], 862, BLUE]),
        ...debtX.map((x, i) => [x - 11, 22, debtOrangeTop[i], debtBlueTop[i], ORANGE])
    ],
    texts: [
        ...debtX.map((x, i) => [x, debtOrangeY[i], debtInterest[i], 'c-in']),
        ...debtX.map((x, i) => [x, i === 9 ? 827 : 825, '1.2', 'c-in']),
        ...yearLabels(2023, debtX, 880)
    ],
    legend: [
        { box: [276, 283, 7], y: 911, fill: BLUE, textX: 286, text: 'Principal' },
        { box: [344, 351, 7], y: 911, fill: ORANGE, textX: 354, text: 'Interest' }
    ]
});

// Drawdown profile
const drawX = [680, 734, 788, 842, 895, 948, 1001, 1054, 1107, 1160];

drawChart({
    id: 'draw',
    box: [641, 630, 559, 303],
    title: ['Bank Debt, EBL and Cash Equity Drawdown Profile - $ mn', 917, 651, 'c-title-sm', 359],
    gridX: [653, 1188],
    gridY: [679, 716, 752, 788, 825, 862],
    bars: [
        [668.5, 23, 794, 862, BLUE],
        [668.5, 23, 770, 794, GREY],
        [723, 22, 747, 862, BLUE],
        [723, 22, 710, 747, GREY],
        [776.5, 24, 802, 862, ORANGE]
    ],
    texts: [
        [680, 829, '9.4', 'c-in'],
        [680, 782, '3.1', 'c-in'],
        [734, 807, '15.6', 'c-in'],
        [734, 729, '5.2', 'c-in'],
        [788.5, 833, '8.3', 'c-in'],
        ...yearLabels(2021, drawX, 881)
    ],
    legend: [
        { box: [783, 791, 8], y: 911, fill: BLUE, textX: 794, text: 'Debt Drawdown' },
        { box: [896, 904, 8], y: 911, fill: ORANGE, textX: 907, text: 'Cash Equity' },
        { box: [984.5, 992, 8], y: 911, fill: GREY, textX: 995, text: 'EBL' }
    ]
});

// FCFF and FCFE, each year: blue left, blue top, blue label y, orange left, orange top, orange label y
const fcfRows = [
    [98, 1068, 1053, 130.5, 1083, 1069, '1.7', '1.2'],
    [210, 1061, 1047, 242, 1078, 1064, '2.0', '1.4'],
    [321.5, 1055, 1041, 354, 1074, 1060, '2.3', '1.6'],
    [433.5, 1049, 1035, 466, 1068, 1054, '2.6', '1.9'],
    [546, 1045, 1030, 578, 1065, 1051, '2.9', '2.1'],
    [658, 1038, 1024, 690.5, 1060, 1045, '3.3', '2.4'],
    [770, 1034, 1019, 803, 1053, 1039, '3.7', '2.8'],
    [882, 1024, 1010, 914.5, 1047, 1033, '4.2', '3.2'],
    [993.5, 1013, 999, 1026, 1039, 1025, '4.8', '3.7'],
    [1105, 1004, 989, 1137.5, 1027, 1012, '5.5', '4.3']
];
const fcfWidth = 24.5;

drawChart({
    id: 'fcf',
    box: [59, 956, 1141, 221],
    title: ['FCFF and FCFE - $ mn', 632, 977, 'c-title', 141],
    gridX: [71, 1189],
    gridY: [1006, 1034, 1061, 1089, 1118],
    bars: fcfRows.flatMap(r => [
        [r[0], fcfWidth, r[1], 1118, BLUE],
        [r[3], fcfWidth, r[4], 1118, ORANGE]
    ]),
    texts: [
        ...fcfRows.flatMap(r => [
            [r[0] + fcfWidth / 2, r[2], r[6]],
            [r[3] + fcfWidth / 2, r[5], r[7]]
        ]),
        ...yearLabels(2023, fcfRows.map(r => (r[0] + r[3] + fcfWidth) / 2), 1134, 'c-year-sm')
    ],
    legend: [
        { box: [595.5, 602.5, 7], y: 1159, fill: BLUE, textX: 606, text: 'FCFF' },
        { box: [640, 647, 7], y: 1159, fill: ORANGE, textX: 650, text: 'FCFE' }
    ]
});
```
